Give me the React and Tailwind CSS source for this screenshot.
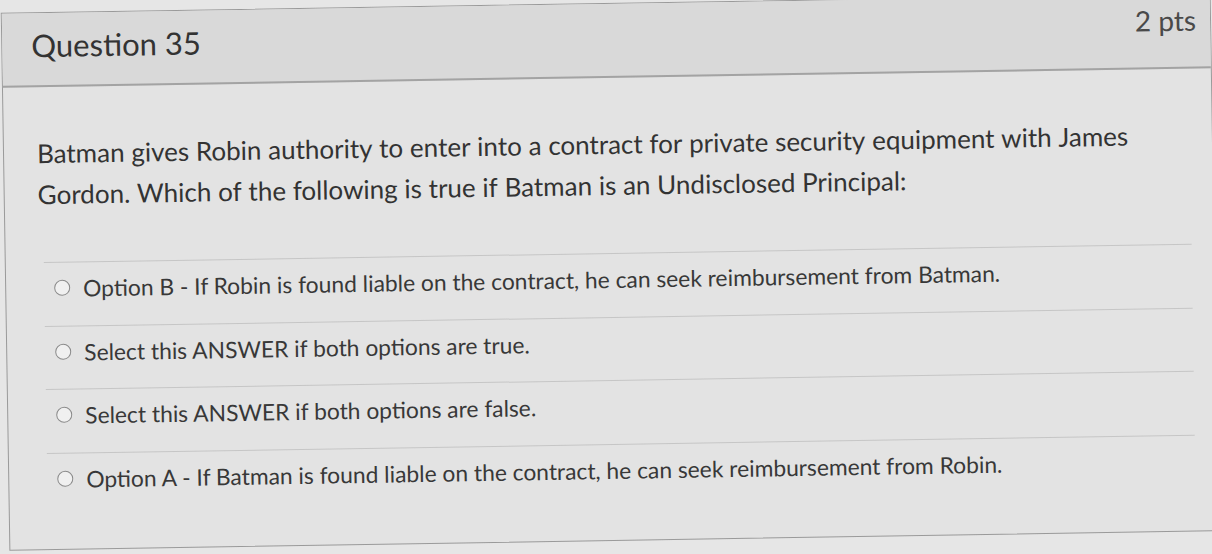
import React from "react";

function Radio() {
  return (
    <span className="inline-block w-[16px] h-[16px] rounded-full border-[1.5px] border-[#8a8a8a] bg-[#f0f0f0] shrink-0"></span>
  );
}

function Words({ text }) {
  const parts = text.split(" ");
  return (
    <div className="flex gap-x-[0.26em]">
      {parts.map((w, i) => (
        <span key={i}>{w}</span>
      ))}
    </div>
  );
}

const options = [
  "Option B - If Robin is found liable on the contract, he can seek reimbursement from Batman.",
  "Select this ANSWER if both options are true.",
  "Select this ANSWER if both options are false.",
  "Option A - If Batman is found liable on the contract, he can seek reimbursement from Robin.",
];

export default function App() {
  return (
    <div
      className="w-[1212px] h-[554px] bg-[#e6e6e6] overflow-hidden"
      style={{ fontFamily: "Lato, 'Noto Sans', sans-serif" }}
    >
      <div className="ml-[5px] mt-[3px] w-[1210px] h-[538px] border border-[#9a9a9a] bg-[#e3e3e3] rotate-[-0.92deg] flex flex-col">
        <div className="h-[74px] bg-[#d9d9d9] border-b-2 border-[#a3a3a3] flex justify-between items-start pl-[29px] pr-[14px] shrink-0">
          <div className="pt-[16px] text-[31px] leading-[32px] text-[#333333]">Question 35</div>
          <div className="pt-[10px] text-[28px] leading-[30px] text-[#4a4a4a]">2 pts</div>
        </div>
        <div className="pl-[33px] pt-[46px] text-[26px] leading-[41px] text-[#333333] pr-[20px] whitespace-nowrap">
          <Words text="Batman gives Robin authority to enter into a contract for private security equipment with James" />
          <Words text="Gordon. Which of the following is true if Batman is an Undisclosed Principal:" />
        </div>
        <div className="ml-[38px] mr-[22px] mt-[47px]">
          {options.map((o, i) => (
            <div
              key={i}
              className="h-[63.5px] border-t-[1.5px] border-[#c6c6c6] flex items-center pl-[10px] pb-[12px] gap-[13px]"
            >
              <Radio />
              <span className="text-[22.8px] text-[#383838] whitespace-nowrap">{o}</span>
            </div>
          ))}
        </div>
      </div>
    </div>
  );
}
